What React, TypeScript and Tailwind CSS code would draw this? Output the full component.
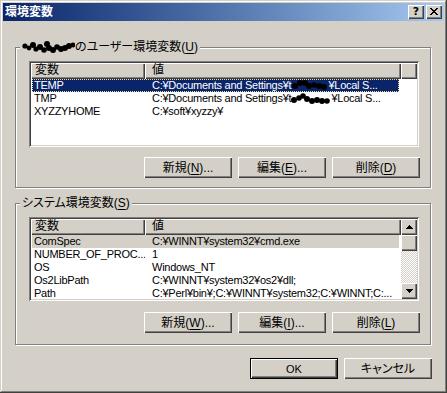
import React from "react";

const raised =
  "bg-[#D4D0C8] shadow-[inset_1px_1px_#fff,inset_-1px_-1px_#404040,inset_-2px_-2px_#808080]";

function Scribble({ w, h = 13, pts }: { w: number; h?: number; pts: number[][] }) {
  return (
    <svg width={w} height={h} viewBox={`0 0 ${w} ${h}`} className="block shrink-0">
      {pts.map((p, i) => (
        <circle key={i} cx={p[0]} cy={p[1]} r={p[2]} fill="#000" />
      ))}
    </svg>
  );
}

const labelPts = [
  [3, 6, 2.6], [7, 8, 2.4], [11, 5, 3], [14, 9, 2.6], [18, 7, 3], [22, 10, 2.8],
  [25, 4, 3], [27, 8, 3], [31, 10, 3], [35, 7, 2.8], [39, 9, 3], [43, 8, 3],
  [47, 6, 3], [51, 5, 2.4],
];
const row1Pts = [
  [4, 7, 3], [9, 4, 3], [14, 4, 3], [18, 7, 3], [23, 6, 2.8], [28, 7, 3], [33, 8, 3],
];
const row2Pts = [
  [3, 8, 3], [8, 6, 2.8], [12, 4, 2.8], [16, 7, 3], [21, 9, 3], [26, 8, 3],
  [31, 9, 3], [36, 9, 2.8],
];

function Btn({ children, def }: { children: React.ReactNode; def?: boolean }) {
  return (
    <div
      className={
        def
          ? "w-[88px] h-[21px] border border-black bg-[#D4D0C8] shadow-[inset_1px_1px_#fff,inset_-1px_-1px_#404040,inset_-2px_-2px_#808080] flex items-center justify-center text-[12px] leading-[14px]"
          : "w-[88px] h-[21px] bg-[#D4D0C8] shadow-[inset_1px_1px_#fff,inset_-1px_-1px_#404040,inset_-2px_-2px_#808080] flex items-center justify-center text-[12px] leading-[14px]"
      }
    >
      {children}
    </div>
  );
}

function U({ c }: { c: string }) {
  return <span className="underline underline-offset-[2px]">{c}</span>;
}

type Row = { name: React.ReactNode; value: React.ReactNode; state?: "focus" | "gray" };

function Tri({ down }: { down?: boolean }) {
  const rows = down ? [7, 5, 3, 1] : [1, 3, 5, 7];
  return (
    <svg width="7" height="4" shapeRendering="crispEdges">
      {rows.map((w, i) => (
        <rect key={i} x={(7 - w) / 2} y={i} width={w} height={1} fill="#000" />
      ))}
    </svg>
  );
}

function ListView({ rows, scroll, h }: { rows: Row[]; scroll?: boolean; h: string }) {
  return (
    <div
      className={
        (h === "86" ? "h-[86px]" : "h-[84px]") +
        " w-[390px] bg-white p-[2px] shadow-[inset_1px_1px_#808080,inset_-1px_-1px_#fff,inset_2px_2px_#404040,inset_-2px_-2px_#D4D0C8] flex overflow-hidden"
      }
    >
      <div className="flex-1 min-w-0 flex flex-col overflow-hidden">
        <div className="flex h-[16px] shrink-0">
          <div className={`w-[114px] shrink-0 ${raised} pl-[4px] text-[12px] leading-[15px]`}>変数</div>
          <div className={`w-[256px] shrink-0 ${raised} pl-[7px] text-[12px] leading-[15px]`}>値</div>
          {!scroll && <div className={`flex-1 ${raised}`} />}
        </div>
        {rows.map((r, i) => (
          <div
            key={i}
            className={
              "flex h-[13px] shrink-0 ml-[1px] w-[367px] text-[11px] leading-[13px] tracking-[-0.25px] " +
              (r.state === "focus"
                ? "bg-[#0A246A] text-white outline-1 outline-dotted outline-[#F5DB95] -outline-offset-1"
                : r.state === "gray"
                ? "bg-[#D4D0C8]"
                : "")
            }
          >
            <div className="w-[113px] shrink-0 pl-[2px] whitespace-nowrap overflow-hidden">{r.name}</div>
            <div className="flex-1 min-w-0 pl-[7px] whitespace-nowrap overflow-hidden flex items-center">
              {r.value}
            </div>
          </div>
        ))}
      </div>
      {scroll && (
        <div className="w-[16px] shrink-0 flex flex-col">
          <div className={`h-[16px] shrink-0 ${raised} flex items-center justify-center`}>
            <Tri />
          </div>
          <div className={`h-[16px] shrink-0 ${raised}`} />
          <div className="flex-1 bg-[image:repeating-conic-gradient(#D4D0C8_0_25%,#fff_0_50%)] bg-[length:2px_2px]" />
          <div className={`h-[16px] shrink-0 ${raised} flex items-center justify-center`}>
            <Tri down />
          </div>
        </div>
      )}
    </div>
  );
}

function Group({
  label,
  children,
  tall,
}: {
  label: React.ReactNode;
  children: React.ReactNode;
  tall?: boolean;
}) {
  return (
    <div
      className={
        (tall ? "h-[142px] mt-[15px]" : "h-[141px] mt-[26px]") +
        " relative ml-[12px] w-[416px] border border-[#808080] shadow-[inset_1px_1px_#fff,1px_1px_#fff] pt-[13px] pl-[13px]"
      }
    >
      <div className="absolute left-[4px] top-[-8px] bg-[#D4D0C8] px-[2px] text-[12px] leading-[14px] flex items-center whitespace-nowrap">
        {label}
      </div>
      {children}
    </div>
  );
}

export default function App() {
  const userRows: Row[] = [
    {
      name: "TEMP",
      state: "focus",
      value: (
        <>
          <span>C:¥Documents and Settings¥t</span>
          <Scribble w={37} pts={row1Pts} />
          <span>¥Local S...</span>
        </>
      ),
    },
    {
      name: "TMP",
      value: (
        <>
          <span>C:¥Documents and Settings¥t</span>
          <Scribble w={40} pts={row2Pts} />
          <span>¥Local S...</span>
        </>
      ),
    },
    { name: "XYZZYHOME", value: "C:¥soft¥xyzzy¥" },
  ];
  const sysRows: Row[] = [
    { name: "ComSpec", value: "C:¥WINNT¥system32¥cmd.exe", state: "gray" },
    { name: "NUMBER_OF_PROC...", value: "1" },
    { name: "OS", value: "Windows_NT" },
    { name: "Os2LibPath", value: "C:¥WINNT¥system32¥os2¥dll;" },
    { name: "Path", value: "C:¥Perl¥bin¥;C:¥WINNT¥system32;C:¥WINNT;C:..." },
  ];

  return (
    <div className="w-[447px] h-[393px] bg-[#D4D0C8] p-[3px] flex flex-col shadow-[inset_-1px_-1px_#404040,inset_1px_1px_#D4D0C8,inset_-2px_-2px_#808080,inset_2px_2px_#fff] font-['Liberation_Sans','Noto_Sans_CJK_JP',sans-serif] [font-feature-settings:'palt'] text-black overflow-hidden">
      <div className="h-[18px] shrink-0 flex items-center bg-linear-to-r from-[#0A246A] to-[#A6CAF0]">
        <div className="flex-1 pl-[2px] text-white font-bold text-[12px] leading-[18px]">環境変数</div>
        <div className="flex gap-[2px] mr-[2px]">
          <div className={`w-[16px] h-[14px] ${raised} flex items-center justify-center`}>
            <span className="font-bold text-[11px] leading-none -mt-[1px] font-['DejaVu_Sans',sans-serif]">?</span>
          </div>
          <div className={`w-[16px] h-[14px] ${raised} flex items-center justify-center`}>
            <svg width="8" height="7" shapeRendering="crispEdges" className="-mt-[1px]">
              {[0, 1, 2, 3, 4, 5, 6].map((i) => (
                <g key={i}>
                  <rect x={i} y={i} width={2} height={1} fill="#000" />
                  <rect x={6 - i} y={i} width={2} height={1} fill="#000" />
                </g>
              ))}
            </svg>
          </div>
        </div>
      </div>

      <Group
        label={
          <>
            <Scribble w={53} h={14} pts={labelPts} />
            <span>のユーザー環境変数(<U c="U" />)</span>
          </>
        }
      >
        <ListView rows={userRows} h="86" />
        <div className="w-[391px] mt-[10px] flex justify-end gap-[6px]">
          <Btn>
            新規(<U c="N" />)...
          </Btn>
          <Btn>
            編集(<U c="E" />)...
          </Btn>
          <Btn>
            削除(<U c="D" />)
          </Btn>
        </div>
      </Group>

      <Group
        tall
        label={
          <span>
            システム環境変数(<U c="S" />)
          </span>
        }
      >
        <ListView rows={sysRows} scroll h="84" />
        <div className="w-[391px] mt-[11px] flex justify-end gap-[6px]">
          <Btn>
            新規(<U c="W" />)...
          </Btn>
          <Btn>
            編集(<U c="I" />)...
          </Btn>
          <Btn>
            削除(<U c="L" />)
          </Btn>
        </div>
      </Group>

      <div className="ml-[12px] w-[417px] mt-[13px] flex justify-end gap-[6px]">
        <Btn def>
          <span className="text-[11px]">OK</span>
        </Btn>
        <Btn>キャンセル</Btn>
      </div>
    </div>
  );
}
